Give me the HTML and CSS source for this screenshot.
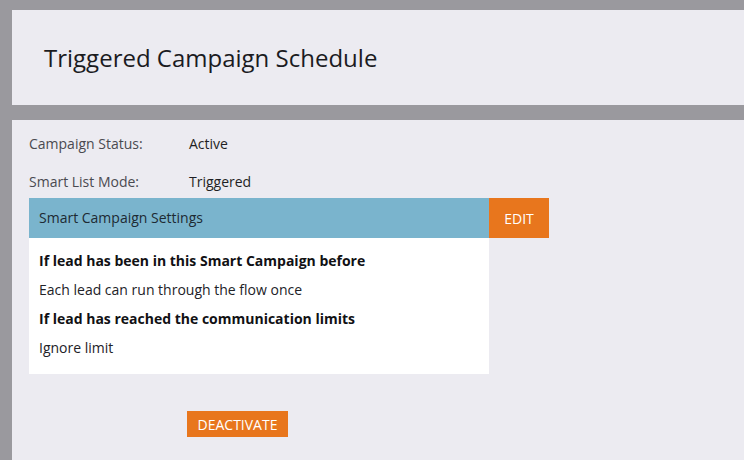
FILE: index.html
```html
<!DOCTYPE html>
<html>
<head>
<meta charset="utf-8">
<link rel="stylesheet" href="styles.css">
</head>
<body>
<div class="page">
  <header class="header">
    <h1 class="title">Triggered Campaign Schedule</h1>
  </header>
  <main class="main">
    <div class="row row-first">
      <span class="label">Campaign Status:</span>
      <span class="value">Active</span>
    </div>
    <div class="row row-second">
      <span class="label">Smart List Mode:</span>
      <span class="value">Triggered</span>
    </div>
    <div class="settings">
      <div class="settings-bar">
        <div class="settings-title">Smart Campaign Settings</div>
        <button class="btn btn-edit">EDIT</button>
      </div>
      <div class="settings-body">
        <div class="line bold">If lead has been in this Smart Campaign before</div>
        <div class="line">Each lead can run through the flow once</div>
        <div class="line bold">If lead has reached the communication limits</div>
        <div class="line">Ignore limit</div>
      </div>
    </div>
    <div class="actions">
      <button class="btn btn-deactivate">DEACTIVATE</button>
    </div>
  </main>
</div>
</body>
</html>
```

FILE: styles.css
```css
html, body {
  margin: 0;
  padding: 0;
  height: 100%;
}
body {
  background: #9a999e;
  font-family: "Open Sans", "Liberation Sans", sans-serif;
  overflow: hidden;
}
.page {
  padding: 10px 0 0 12px;
  display: flex;
  flex-direction: column;
  height: 100%;
  box-sizing: border-box;
}
.header {
  background: #ecebf1;
  height: 95px;
  box-sizing: border-box;
  padding: 32px 0 0 32px;
}
.title {
  margin: 0;
  font-size: 24px;
  font-weight: 400;
  line-height: 32px;
  color: #1b1b1f;
}
.main {
  margin-top: 15px;
  background: #ecebf1;
  flex: 1;
  padding: 14px 0 0 17px;
}
.row {
  display: flex;
  font-size: 14px;
  line-height: 20px;
}
.row-first { margin-bottom: 18px; }
.row-second { margin-bottom: 6px; }
.label {
  width: 160px;
  color: #4a4a50;
}
.value {
  color: #1f1f24;
}
.settings {
  width: 520px;
}
.settings-bar {
  display: flex;
  height: 40px;
}
.settings-title {
  width: 460px;
  background: #7ab4cd;
  padding-left: 10px;
  box-sizing: border-box;
  font-size: 14px;
  line-height: 40px;
  color: #1d2a33;
}
.btn {
  border: 0;
  margin: 0;
  font-family: "Open Sans", "Liberation Sans", sans-serif;
  font-size: 14px;
  color: #ffffff;
  background: #e8761d;
  cursor: pointer;
  padding: 0;
}
.btn-edit {
  width: 60px;
  height: 40px;
}
.settings-body {
  width: 460px;
  background: #ffffff;
  box-sizing: border-box;
  padding: 8px 10px 12px 10px;
}
.line {
  font-size: 14px;
  line-height: 29px;
  color: #222227;
}
.line.bold {
  font-weight: 700;
  color: #111114;
}
.actions {
  margin-top: 37px;
  padding-left: 158px;
}
.btn-deactivate {
  width: 101px;
  height: 26px;
}
```
